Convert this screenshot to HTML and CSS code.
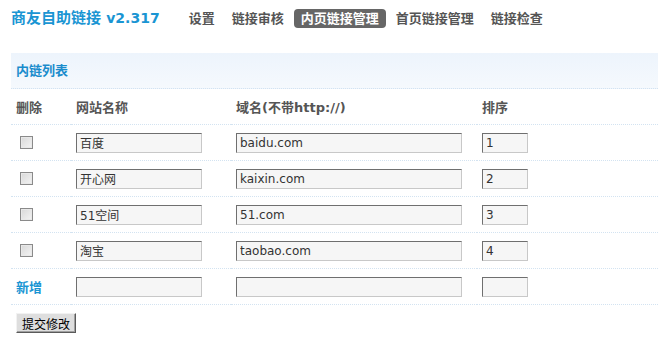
FILE: index.html
```html
<!DOCTYPE html>
<html lang="zh-CN">
<head>
    <meta charset="UTF-8">
    <title>内页链接管理</title>
    <link rel="stylesheet" href="styles.css">
</head>
<body>
    <div class="top">
        <div class="logo">商友自助链接 <span class="ver">v2.317</span></div>
        <ul class="nav">
            <li><a href="#">设置</a></li>
            <li><a href="#">链接审核</a></li>
            <li><a href="#" class="active">内页链接管理</a></li>
            <li><a href="#">首页链接管理</a></li>
            <li><a href="#">链接检查</a></li>
        </ul>
    </div>

    <div class="panel">
        <div class="panel-title">内链列表</div>
        <form>
            <table class="links">
                <colgroup>
                    <col class="c-del">
                    <col class="c-name">
                    <col class="c-host">
                    <col>
                </colgroup>
                <tr class="head">
                    <td>删除</td>
                    <td>网站名称</td>
                    <td>域名(不带http://)</td>
                    <td>排序</td>
                </tr>
                <tr>
                    <td><input type="checkbox" class="chk"></td>
                    <td><input type="text" class="txt name" value="百度"></td>
                    <td><input type="text" class="txt host" value="baidu.com"></td>
                    <td><input type="text" class="txt sort" value="1"></td>
                </tr>
                <tr>
                    <td><input type="checkbox" class="chk"></td>
                    <td><input type="text" class="txt name" value="开心网"></td>
                    <td><input type="text" class="txt host" value="kaixin.com"></td>
                    <td><input type="text" class="txt sort" value="2"></td>
                </tr>
                <tr>
                    <td><input type="checkbox" class="chk"></td>
                    <td><input type="text" class="txt name" value="51空间"></td>
                    <td><input type="text" class="txt host" value="51.com"></td>
                    <td><input type="text" class="txt sort" value="3"></td>
                </tr>
                <tr>
                    <td><input type="checkbox" class="chk"></td>
                    <td><input type="text" class="txt name" value="淘宝"></td>
                    <td><input type="text" class="txt host" value="taobao.com"></td>
                    <td><input type="text" class="txt sort" value="4"></td>
                </tr>
                <tr>
                    <td class="add">新增</td>
                    <td><input type="text" class="txt name"></td>
                    <td><input type="text" class="txt host"></td>
                    <td><input type="text" class="txt sort"></td>
                </tr>
            </table>
            <div class="actions">
                <button type="button" class="btn">提交修改</button>
            </div>
        </form>
    </div>
</body>
</html>
```

FILE: styles.css
```css
body {
    margin: 0;
    font-family: "DejaVu Sans", "Noto Sans CJK SC", sans-serif;
    font-size: 12px;
    color: #333;
    background: #fff;
}

/* шапка */
.top {
    height: 53px;
    box-sizing: border-box;
    padding: 9px 11px 0;
    display: flex;
    align-items: flex-start;
}
.logo {
    font-size: 15px;
    font-weight: bold;
    color: #1a95d3;
    line-height: 19px;
    margin-right: 22px;
}
.logo .ver {
    font-size: 14px;
}
.nav {
    list-style: none;
    margin: 0;
    padding: 0;
    display: flex;
    gap: 3px;
}
.nav a {
    display: block;
    padding: 0 7px;
    height: 19px;
    line-height: 19px;
    font-size: 13px;
    font-weight: bold;
    color: #555;
    text-decoration: none;
    border-radius: 4px;
}
.nav a.active {
    background: #666;
    color: #fff;
}

/* список */
.panel {
    margin-left: 11px;
}
.panel-title {
    height: 35px;
    line-height: 35px;
    padding-left: 5px;
    font-size: 13px;
    font-weight: bold;
    color: #1a8ccc;
    background: linear-gradient(#edf4fc, #f5f9fd);
    border-bottom: 1px dotted #d3e3f1;
}
.links {
    width: 100%;
    border-collapse: separate;
    border-spacing: 0;
}
.c-del { width: 60px; }
.c-name { width: 160px; }
.c-host { width: 246px; }
.links td {
    height: 35px;
    padding: 0 5px;
    border-bottom: 1px dotted #d3e3f1;
    vertical-align: middle;
}
.links .head td {
    font-size: 13px;
    font-weight: bold;
    color: #555;
}
.links td.add {
    font-size: 13px;
    font-weight: bold;
    color: #1a95d3;
}
.chk {
    appearance: none;
    display: block;
    width: 13px;
    height: 13px;
    margin: 0 0 0 4px;
    box-sizing: border-box;
    border: 1px solid #8a8a8a;
    background: linear-gradient(135deg, #d8d8d8, #f4f4f4);
    box-shadow: inset 0 0 0 1px #e8e8e8;
}
.txt {
    display: block;
    box-sizing: border-box;
    height: 20px;
    margin: 0;
    padding: 0 3px;
    border: 1px solid;
    border-color: #6f6f6f #c8c8c8 #c8c8c8 #6f6f6f;
    background: #f6f6f6;
    font-family: "DejaVu Sans", "Noto Sans CJK SC", sans-serif;
    font-size: 12px;
    color: #333;
    outline: none;
}
.txt.name { width: 126px; }
.txt.host { width: 226px; }
.txt.sort { width: 46px; }

.actions {
    padding: 8px 5px;
}
.btn {
    height: 20px;
    width: 60px;
    padding: 0;
    font-family: "Noto Sans CJK SC", sans-serif;
    font-size: 12px;
    color: #000;
    background: #dedede;
    border: 1px solid;
    border-color: #f2f2f2 #5a5a5a #5a5a5a #f2f2f2;
    box-shadow: inset -1px -1px 0 #a0a0a0;
    cursor: pointer;
}
```
